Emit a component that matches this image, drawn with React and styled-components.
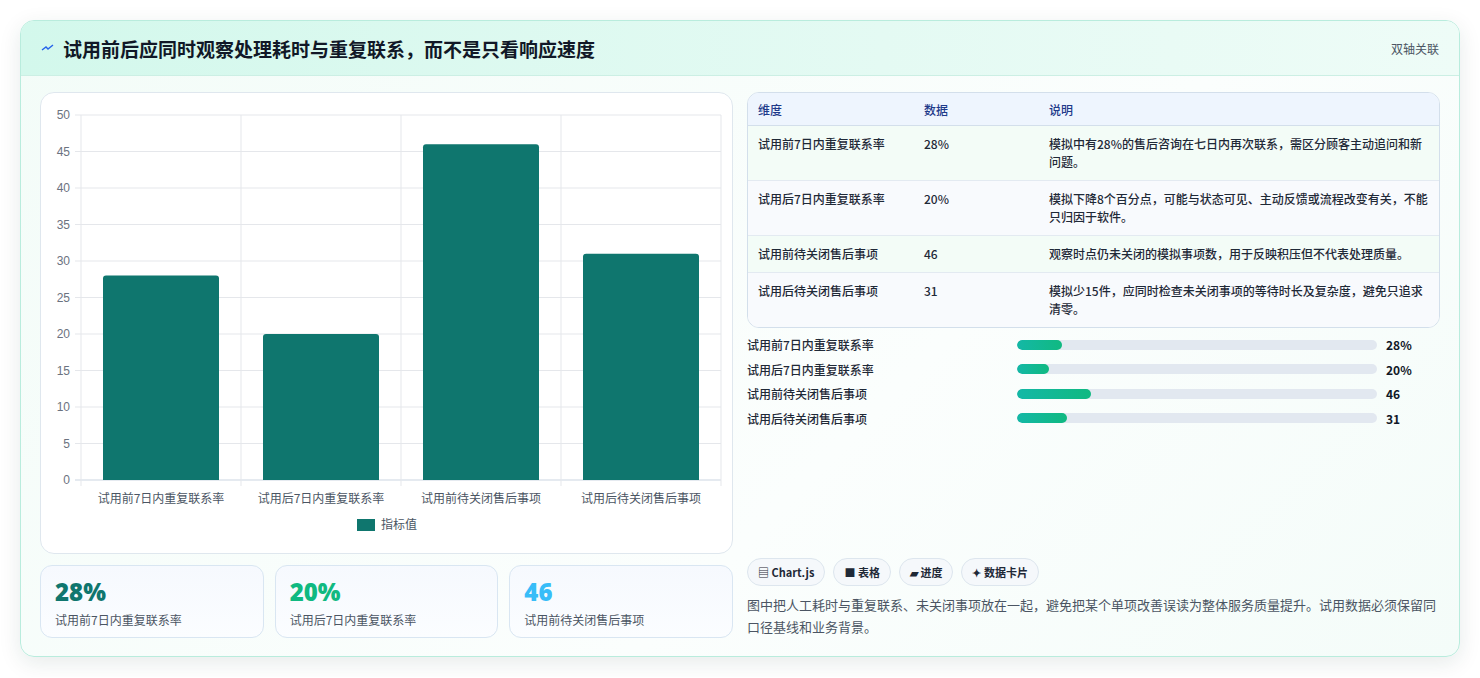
import styled, { createGlobalStyle } from 'styled-components';

const GlobalStyle = createGlobalStyle`
  html, body { margin: 0; background: #ffffff; }
  body { font-family: "Noto Sans CJK SC", "Noto Sans", sans-serif; color: #1f2937; }
`;

const Page = styled.div`
  padding: 20px;
  width: 1480px;
  box-sizing: border-box;
`;

const Card = styled.div`
  width: 1440px;
  height: 637px;
  box-sizing: border-box;
  border: 1px solid #b9ecdd;
  border-radius: 14px;
  background: linear-gradient(135deg, #f3fcf8 0%, #fbfefd 60%, #f4fcf9 100%);
  box-shadow: 0 6px 22px rgba(15, 60, 50, 0.1);
  overflow: hidden;
  display: flex;
  flex-direction: column;
`;

const Header = styled.div`
  height: 55px;
  flex-shrink: 0;
  box-sizing: border-box;
  padding: 0 20px;
  display: flex;
  align-items: center;
  justify-content: space-between;
  background: linear-gradient(90deg, #d3f8ec 0%, #e4faf3 60%, #eefcf7 100%);
  border-bottom: 1px solid #ccefe4;
`;

const Title = styled.h1`
  margin: 0;
  font-size: 19px;
  font-weight: 700;
  color: #111827;
  display: flex;
  align-items: center;
  gap: 8px;
`;

const Tag = styled.span`
  font-size: 12px;
  color: #4b5563;
`;

const Body = styled.div`
  flex: 1;
  padding: 16px 19px 18px;
  display: grid;
  grid-template-columns: 693px 693px;
  gap: 14px;
`;

const Column = styled.div`
  display: flex;
  flex-direction: column;
  gap: 11px;
`;

const ChartBox = styled.div`
  height: 462px;
  box-sizing: border-box;
  background: #fff;
  border: 1px solid #dfe7ee;
  border-radius: 14px;
`;

const Stats = styled.div`
  display: grid;
  grid-template-columns: repeat(3, 1fr);
  gap: 11px;
`;

const Stat = styled.div`
  height: 73px;
  box-sizing: border-box;
  padding: 12px 14px;
  border: 1px solid #d9e6f2;
  border-radius: 12px;
  background: linear-gradient(180deg, #f6f9fe, #fbfdff);
`;

const StatValue = styled.div`
  font-family: "Open Sans", "Noto Sans", sans-serif;
  font-size: 24px;
  font-weight: 800;
  line-height: 28px;
  color: ${p => p.$color};
`;

const StatLabel = styled.div`
  margin-top: 5px;
  font-size: 12px;
  color: #4b5563;
`;

const Table = styled.table`
  width: 100%;
  border-collapse: separate;
  border-spacing: 0;
  border: 1px solid #d3dfeb;
  border-radius: 12px;
  overflow: hidden;
  font-size: 12px;
  background: #fff;
`;

const Th = styled.th`
  text-align: left;
  font-weight: 500;
  color: #1e3a8a;
  height: 32px;
  padding: 0 10px;
  background: #eef5fe;
  border-bottom: 1px solid #d3dfeb;
`;

const Td = styled.td`
  padding: 9px 10px;
  vertical-align: top;
  line-height: 18px;
  color: #1f2937;
  font-weight: 500;
  background: ${p => (p.$alt ? '#f8fafd' : '#f3fcf7')};
  border-top: ${p => (p.$first ? 'none' : '1px solid #e3eaf1')};
`;

const Progress = styled.div`
  margin-top: 8px;
  display: flex;
  flex-direction: column;
  gap: 7px;
`;

const ProgRow = styled.div`
  display: grid;
  grid-template-columns: 261px 360px 1fr;
  align-items: center;
  column-gap: 9px;
  height: 17.5px;
  font-size: 12px;
  font-weight: 500;
`;

const Track = styled.div`
  height: 10px;
  border-radius: 5px;
  background: #e2e8f0;
  overflow: hidden;
`;

const Fill = styled.div`
  height: 100%;
  border-radius: 5px;
  background: linear-gradient(90deg, #14b8a6, #10b981);
`;

const ProgValue = styled.span`
  font-weight: 700;
  color: #111827;
`;

const Chips = styled.div`
  margin-top: auto;
  display: flex;
  gap: 8px;
`;

const Chip = styled.span`
  height: 28px;
  padding: 0 10px;
  box-sizing: border-box;
  border: 1px solid #dde6ee;
  border-radius: 14px;
  background: #f5f8fb;
  display: inline-flex;
  align-items: center;
  gap: 4px;
  font-size: 11px;
  font-weight: 700;
  color: #1f2937;
`;

const Note = styled.p`
  margin: 8px 0 0;
  font-size: 13px;
  line-height: 22px;
  color: #4b5563;
`;

const rows = [
  ['试用前7日内重复联系率', '28%', '模拟中有28%的售后咨询在七日内再次联系，需区分顾客主动追问和新问题。', 28],
  ['试用后7日内重复联系率', '20%', '模拟下降8个百分点，可能与状态可见、主动反馈或流程改变有关，不能只归因于软件。', 20],
  ['试用前待关闭售后事项', '46', '观察时点仍未关闭的模拟事项数，用于反映积压但不代表处理质量。', 46],
  ['试用后待关闭售后事项', '31', '模拟少15件，应同时检查未关闭事项的等待时长及复杂度，避免只追求清零。', 31],
];

function BarChart() {
  const x0 = 40, x1 = 680, yTop = 22, yBot = 387;
  const yOf = v => yBot - (v / 50) * (yBot - yTop);
  const col = (x1 - x0) / 4;
  return (
    <svg width="691" height="460" style={{ display: 'block' }}>
      {[0, 5, 10, 15, 20, 25, 30, 35, 40, 45, 50].map(v => (
        <g key={v}>
          <line x1={x0 - 6} x2={x1} y1={yOf(v)} y2={yOf(v)} stroke={v === 0 ? '#cbd5e1' : '#e5e7eb'} />
          <text x={x0 - 11} y={yOf(v) + 4} textAnchor="end" fontSize="12" fill="#6b7280" fontFamily="Liberation Sans, sans-serif">{v}</text>
        </g>
      ))}
      {[0, 1, 2, 3, 4].map(i => (
        <line key={i} x1={x0 + i * col} x2={x0 + i * col} y1={yTop} y2={yBot + 6} stroke="#e5e7eb" />
      ))}
      {rows.map((r, i) => (
        <g key={r[0]}>
          <path
            d={`M${x0 + i * col + 22} ${yBot} V${yOf(r[3]) + 3} Q${x0 + i * col + 22} ${yOf(r[3])} ${x0 + i * col + 25} ${yOf(r[3])} H${x0 + i * col + col - 25} Q${x0 + i * col + col - 22} ${yOf(r[3])} ${x0 + i * col + col - 22} ${yOf(r[3]) + 3} V${yBot} Z`}
            fill="#0f766e"
          />
          <text x={x0 + i * col + col / 2} y={yBot + 23} textAnchor="middle" fontSize="12" fill="#4b5563">{r[0]}</text>
        </g>
      ))}
      <rect x="316" y="426" width="18" height="12" fill="#0f766e" />
      <text x="340" y="436" fontSize="12" fill="#4b5563">指标值</text>
    </svg>
  );
}

export default function App() {
  return (
    <Page>
      <GlobalStyle />
      <Card>
        <Header>
          <Title>
            <svg width="14" height="14" viewBox="0 0 14 14">
              <path d="M1 9 L5 6 L7 8 L12 4" stroke="#2563eb" strokeWidth="1.4" fill="none" />
            </svg>
            试用前后应同时观察处理耗时与重复联系，而不是只看响应速度
          </Title>
          <Tag>双轴关联</Tag>
        </Header>
        <Body>
          <Column>
            <ChartBox><BarChart /></ChartBox>
            <Stats>
              <Stat><StatValue $color="#0f766e">28%</StatValue><StatLabel>试用前7日内重复联系率</StatLabel></Stat>
              <Stat><StatValue $color="#10b981">20%</StatValue><StatLabel>试用后7日内重复联系率</StatLabel></Stat>
              <Stat><StatValue $color="#38bdf8">46</StatValue><StatLabel>试用前待关闭售后事项</StatLabel></Stat>
            </Stats>
          </Column>
          <Column style={{ gap: 0 }}>
            <Table>
              <colgroup><col width="166" /><col width="125" /><col /></colgroup>
              <thead><tr><Th>维度</Th><Th>数据</Th><Th>说明</Th></tr></thead>
              <tbody>
                {rows.map((r, i) => (
                  <tr key={r[0]}>
                    <Td $alt={i % 2 === 1} $first={i === 0}>{r[0]}</Td>
                    <Td $alt={i % 2 === 1} $first={i === 0}>{r[1]}</Td>
                    <Td $alt={i % 2 === 1} $first={i === 0}>{r[2]}</Td>
                  </tr>
                ))}
              </tbody>
            </Table>
            <Progress>
              {rows.map(r => (
                <ProgRow key={r[0]}>
                  <span>{r[0]}</span>
                  <Track><Fill style={{ width: `${(r[3] / 225) * 100}%` }} /></Track>
                  <ProgValue>{r[1]}</ProgValue>
                </ProgRow>
              ))}
            </Progress>
            <Chips>
              <Chip>▤ Chart.js</Chip>
              <Chip>■ 表格</Chip>
              <Chip>▰ 进度</Chip>
              <Chip>✦ 数据卡片</Chip>
            </Chips>
            <Note>图中把人工耗时与重复联系、未关闭事项放在一起，避免把某个单项改善误读为整体服务质量提升。试用数据必须保留同口径基线和业务背景。</Note>
          </Column>
        </Body>
      </Card>
    </Page>
  );
}
